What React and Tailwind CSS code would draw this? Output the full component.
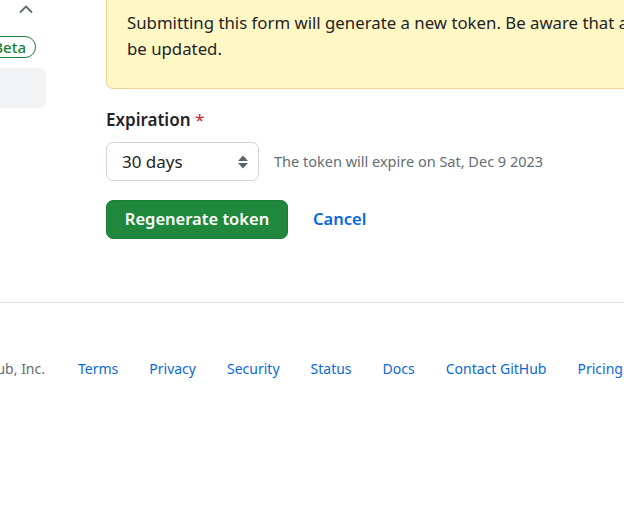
import React from 'react';

const font = { fontFamily: '"Noto Sans", "Liberation Sans", sans-serif' };

function Sidebar() {
  return (
    <div className="w-[100px] -ml-[54px] shrink-0 flex flex-col">
      <div className="h-[16px] flex justify-end pr-[13px] pt-[5px]">
        <svg width="14" height="8" viewBox="0 0 14 8" fill="none">
          <path d="M1.5 7 L7 1.5 L12.5 7" stroke="#656d76" strokeWidth="1.8" strokeLinecap="round" strokeLinejoin="round" />
        </svg>
      </div>
      <div className="flex justify-end pr-[10px] mt-[20px]">
        <span className="h-[22px] px-[9px] rounded-full border border-[#1a7f37] text-[#1a7f37] text-[15px] leading-[20px] font-medium">Beta</span>
      </div>
      <div className="mt-[10px] h-[40px] rounded-[7px] bg-[#f3f4f6]"></div>
    </div>
  );
}

function SelectArrows() {
  return (
    <svg width="12" height="16" viewBox="0 0 12 16" fill="#59636e">
      <path d="M6 1.5 L11 7 H1 Z" />
      <path d="M6 14.5 L11 9 H1 Z" />
    </svg>
  );
}

function TokenForm() {
  return (
    <div className="ml-[60px] flex-1 min-w-0">
      <div className="-mt-[10px] w-[560px] rounded-b-[7px] border border-t-0 border-[#ecd58f] bg-[#fff8c5] pl-[20px] pt-[20px] pb-[26px] text-[16.8px] leading-[26px] text-[#1f2328] whitespace-nowrap overflow-hidden">
        Submitting this form will generate a new token. Be aware that any scripts or applications using this token will need to
        <br />
        be updated.
      </div>

      <div className="mt-[19px] text-[17px] leading-[24px] font-semibold text-[#1f2328]">
        Expiration <span className="text-[#cf222e] font-normal">*</span>
      </div>

      <div className="mt-[10px] flex items-center">
        <div className="w-[153px] h-[39px] rounded-[7px] border border-[#d0d7de] bg-white flex items-center justify-between pl-[15px] pr-[9px]">
          <span className="text-[17px] text-[#1f2328]">30 days</span>
          <SelectArrows />
        </div>
        <span className="ml-[15px] text-[14.5px] text-[#656d76]">The token will expire on Sat, Dec 9 2023</span>
      </div>

      <div className="mt-[19px] flex items-center">
        <button className="w-[182px] h-[39px] rounded-[7px] bg-[#1f883d] border border-[#1a7f37] text-white text-[16.5px] font-semibold">
          Regenerate token
        </button>
        <a className="ml-[25px] text-[16.5px] font-semibold text-[#0969da]">Cancel</a>
      </div>
    </div>
  );
}

function Footer() {
  const links = ['Terms', 'Privacy', 'Security', 'Status', 'Docs', 'Contact GitHub', 'Pricing', 'API'];
  return (
    <div className="flex items-center h-[22px] -ml-[200px] text-[14px] whitespace-nowrap">
      <div className="w-[245px] shrink-0 text-right text-[#656d76]">© 2023 GitHub, Inc.</div>
      <div className="ml-[33px] flex gap-[31px] text-[#0969da]">
        {links.map((l) => (
          <a key={l}>{l}</a>
        ))}
      </div>
    </div>
  );
}

export default function App() {
  return (
    <div style={font} className="w-[624px] h-[511px] overflow-hidden bg-white">
      <div className="flex h-[302px]">
        <Sidebar />
        <TokenForm />
      </div>
      <div className="h-px bg-[#d8dee4]"></div>
      <div className="mt-[54px]">
        <Footer />
      </div>
    </div>
  );
}
